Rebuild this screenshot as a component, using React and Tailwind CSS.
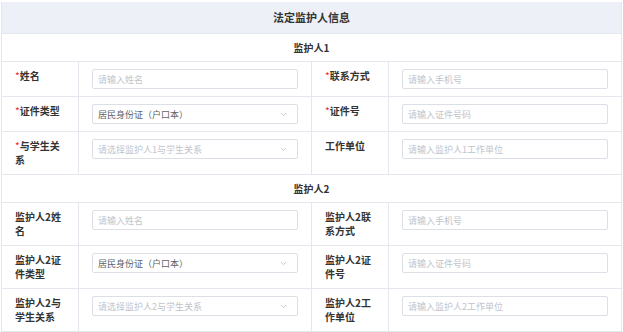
import { ChevronDown } from "lucide-react";

const font = { fontFamily: '"Noto Sans CJK SC", "Noto Sans", sans-serif' };

const guardian1 = [
  [
    { label: "姓名", required: true, type: "input", placeholder: "请输入姓名" },
    { label: "联系方式", required: true, type: "input", placeholder: "请输入手机号" },
  ],
  [
    { label: "证件类型", required: true, type: "select", value: "居民身份证（户口本）" },
    { label: "证件号", required: true, type: "input", placeholder: "请输入证件号码" },
  ],
  [
    { label: "与学生关系", required: true, type: "select", placeholder: "请选择监护人1与学生关系" },
    { label: "工作单位", type: "input", placeholder: "请输入监护人1工作单位" },
  ],
];

const guardian2 = [
  [
    { label: "监护人2姓名", type: "input", placeholder: "请输入姓名" },
    { label: "监护人2联系方式", type: "input", placeholder: "请输入手机号" },
  ],
  [
    { label: "监护人2证件类型", type: "select", value: "居民身份证（户口本）" },
    { label: "监护人2证件号", type: "input", placeholder: "请输入证件号码" },
  ],
  [
    { label: "监护人2与学生关系", type: "select", placeholder: "请选择监护人2与学生关系" },
    { label: "监护人2工作单位", type: "input", placeholder: "请输入监护人2工作单位" },
  ],
];

const Label = ({ field, last }) => (
  <div
    className={`px-[13px] pt-[7px] pb-[7px] border-r border-[#e4e8ee] text-[10px] leading-[14px] font-bold text-[#333] break-all`}
  >
    {field.required && <span className="text-[#f5222d] font-normal">*</span>}
    {field.label}
  </div>
);

const Control = ({ field, last }) => (
  <div
    className={`px-[13px] py-[7px] ${last ? "" : "border-r border-[#e4e8ee]"}`}
  >
    <div className="h-[20px] flex items-center justify-between border border-[#dcdfe6] rounded-[2px] bg-white pl-[5px] pr-[9px]">
      <span
        className={`text-[9px] leading-none whitespace-nowrap ${
          field.value ? "text-[#606266]" : "text-[#c0c4cc]"
        }`}
      >
        {field.value || field.placeholder}
      </span>
      {field.type === "select" && (
        <ChevronDown size={9} strokeWidth={2.5} className="text-[#c0c4cc]" />
      )}
    </div>
  </div>
);

const FieldRow = ({ fields }) => (
  <div className="grid grid-cols-[77px_233px_77px_232px] border-b border-[#e4e8ee]">
    <Label field={fields[0]} />
    <Control field={fields[0]} />
    <Label field={fields[1]} />
    <Control field={fields[1]} last />
  </div>
);

const Section = ({ title, rows }) => (
  <>
    <div className="h-[28px] flex items-center justify-center border-b border-[#e4e8ee] text-[10px] font-bold text-[#333]">
      {title}
    </div>
    {rows.map((fields, i) => (
      <FieldRow key={i} fields={fields} />
    ))}
  </>
);

const App = () => {
  return (
    <div className="w-[623px] h-[332px] bg-white flex flex-col" style={font}>
      <div className="ml-[1px] mt-[2px] w-[621px] border-l border-r border-[#e4e8ee] bg-white">
        <div className="h-[32px] flex items-center justify-center bg-[#edf1f7] border-b border-[#e4e8ee] text-[11px] font-bold text-[#333]">
          法定监护人信息
        </div>
        <Section title="监护人1" rows={guardian1} />
        <Section title="监护人2" rows={guardian2} />
      </div>
      <div className="flex-1 bg-[#f2f4f7]" />
    </div>
  );
};

export default App;
